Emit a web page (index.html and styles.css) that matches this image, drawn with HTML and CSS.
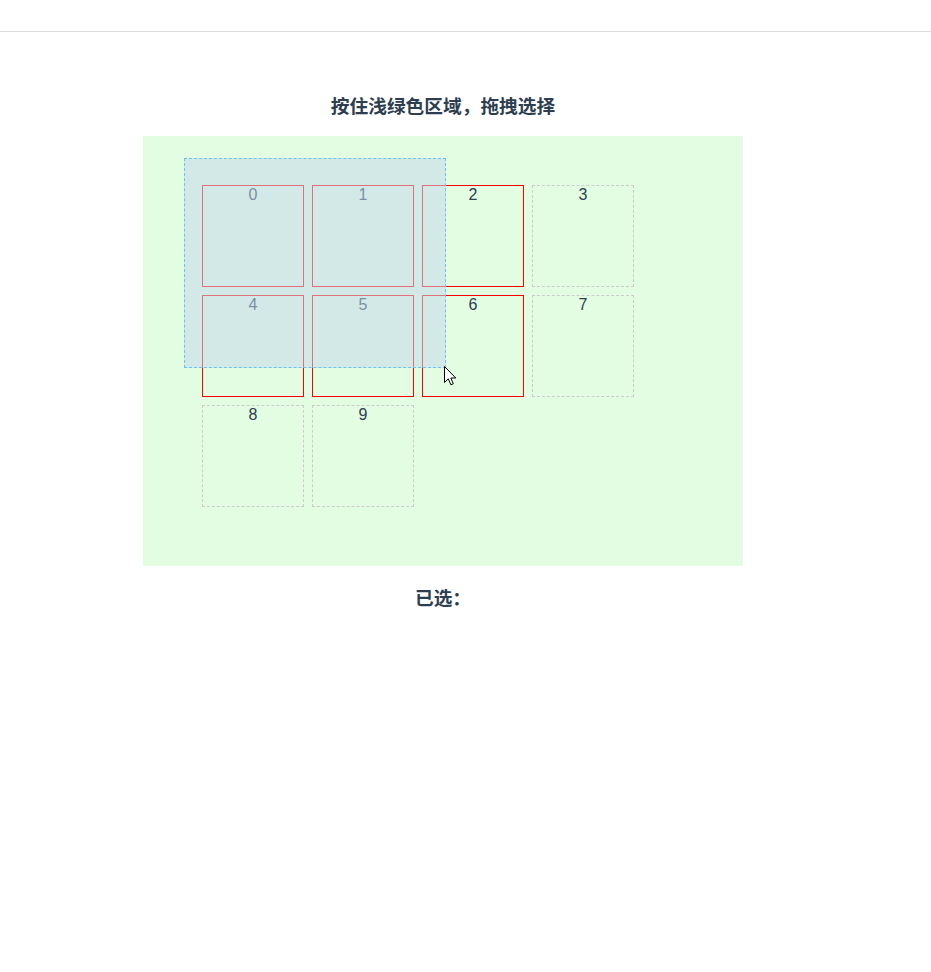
FILE: index.html
```html
<!DOCTYPE html>
<html lang="zh">
<head>
<meta charset="utf-8">
<title>拖拽选择</title>
<link rel="stylesheet" href="styles.css">
</head>
<body>
<div class="header"></div>
<div class="main">
  <h3 class="title">按住浅绿色区域，拖拽选择</h3>
  <div class="area">
    <div class="item selected">0</div>
    <div class="item selected">1</div>
    <div class="item selected">2</div>
    <div class="item">3</div>
    <div class="item selected">4</div>
    <div class="item selected">5</div>
    <div class="item selected">6</div>
    <div class="item">7</div>
    <div class="item">8</div>
    <div class="item">9</div>
    <div class="select-box"></div>
    <svg class="cursor" width="13" height="20" viewBox="0 0 13 20">
      <path d="M0.5 0.5 L0.5 16.5 L4.3 12.8 L6.9 18.8 L9.3 17.8 L6.8 12 L11.8 12 Z" fill="#fff" stroke="#000" stroke-width="1" stroke-linejoin="miter"/>
    </svg>
  </div>
  <h3 class="result">已选：</h3>
</div>
</body>
</html>
```
FILE: styles.css
```css
html, body {
  margin: 0;
  padding: 0;
  background: #fff;
}
body {
  font-family: "Liberation Sans", "Noto Sans CJK SC", sans-serif;
  color: #2c3e50;
}
.header {
  height: 31px;
  border-bottom: 1px solid #dcdcdc;
}
.main {
  width: 886px;
  text-align: center;
}
.title, .result {
  font-family: "Noto Sans CJK SC", sans-serif;
  font-size: 18.72px;
  font-weight: bold;
  line-height: 24px;
  margin: 0;
}
.title {
  margin: 61px 0 19px;
}
.result {
  margin: 19px 0 0;
}
.area {
  position: relative;
  box-sizing: border-box;
  width: 600px;
  height: 430px;
  margin: 0 auto;
  padding: 49px 59px 0;
  background: #e3fde3;
  display: flex;
  flex-wrap: wrap;
  align-content: flex-start;
  gap: 8px;
}
.item {
  box-sizing: border-box;
  width: 102px;
  height: 102px;
  border: 1px dashed #cccccc;
  font-size: 16px;
  line-height: 16px;
  padding-top: 1px;
  text-align: center;
}
.item.selected {
  border: 1px solid #ff0000;
}
.select-box {
  position: absolute;
  left: 41px;
  top: 22px;
  width: 262px;
  height: 210px;
  box-sizing: border-box;
  border: 1px dashed #6cc3f0;
  background: rgba(196, 214, 234, 0.52);
}
.cursor {
  position: absolute;
  left: 301px;
  top: 230px;
}
```
